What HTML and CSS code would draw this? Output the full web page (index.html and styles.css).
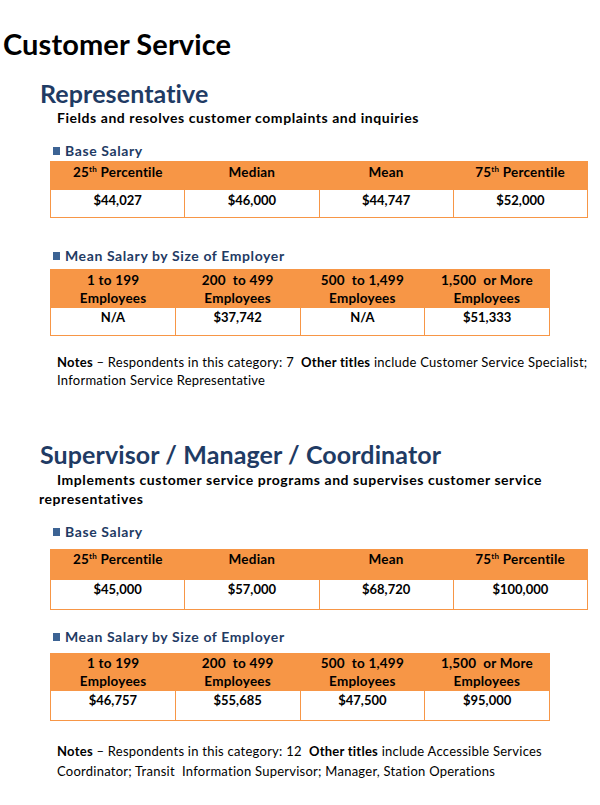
FILE: index.html
```html
<!DOCTYPE html>
<html lang="en">
<head>
<meta charset="utf-8">
<title>Customer Service</title>
<link rel="stylesheet" href="styles.css">
</head>
<body>
<h1 class="page-title">Customer Service</h1>

<section class="job job-first">
  <h2 class="job-title">Representative</h2>
  <p class="job-desc">Fields and resolves customer complaints and inquiries</p>

  <h3 class="sub-head sub-base">Base Salary</h3>
  <table class="salary wide">
    <thead>
      <tr><th>25<sup>th</sup> Percentile</th><th>Median</th><th>Mean</th><th>75<sup>th</sup> Percentile</th></tr>
    </thead>
    <tbody>
      <tr><td>$44,027</td><td>$46,000</td><td>$44,747</td><td>$52,000</td></tr>
    </tbody>
  </table>

  <h3 class="sub-head sub-size">Mean Salary by Size of Employer</h3>
  <table class="salary narrow">
    <thead>
      <tr><th>1 to 199<br>Employees</th><th>200 &nbsp;to 499<br>Employees</th><th>500 &nbsp;to 1,499<br>Employees</th><th>1,500 &nbsp;or More<br>Employees</th></tr>
    </thead>
    <tbody>
      <tr><td>N/A</td><td>$37,742</td><td>N/A</td><td>$51,333</td></tr>
    </tbody>
  </table>

  <div class="notes">
    <p class="note-line"><b>Notes</b> – Respondents in this category: 7 &nbsp;<b>Other titles</b> include Customer Service Specialist;</p>
    <p class="note-line">Information Service Representative</p>
  </div>
</section>

<section class="job job-second">
  <h2 class="job-title">Supervisor / Manager / Coordinator</h2>
  <p class="job-desc">Implements customer service programs and supervises customer service representatives</p>

  <h3 class="sub-head sub-base">Base Salary</h3>
  <table class="salary wide tall">
    <thead>
      <tr><th>25<sup>th</sup> Percentile</th><th>Median</th><th>Mean</th><th>75<sup>th</sup> Percentile</th></tr>
    </thead>
    <tbody>
      <tr><td>$45,000</td><td>$57,000</td><td>$68,720</td><td>$100,000</td></tr>
    </tbody>
  </table>

  <h3 class="sub-head sub-size">Mean Salary by Size of Employer</h3>
  <table class="salary narrow tall">
    <thead>
      <tr><th>1 to 199<br>Employees</th><th>200 &nbsp;to 499<br>Employees</th><th>500 &nbsp;to 1,499<br>Employees</th><th>1,500 &nbsp;or More<br>Employees</th></tr>
    </thead>
    <tbody>
      <tr><td>$46,757</td><td>$55,685</td><td>$47,500</td><td>$95,000</td></tr>
    </tbody>
  </table>

  <div class="notes">
    <p class="note-line"><b>Notes</b> – Respondents in this category: 12 &nbsp;<b>Other titles</b> include Accessible Services</p>
    <p class="note-line">Coordinator; Transit &nbsp;Information Supervisor; Manager, Station Operations</p>
  </div>
</section>
</body>
</html>
```

FILE: styles.css
```css
* { box-sizing: border-box; }

html, body {
  margin: 0;
  padding: 0;
  background: #ffffff;
}

body {
  font-family: Lato, "Open Sans", "Liberation Sans", sans-serif;
  color: #000000;
  width: 600px;
}

.page-title {
  margin: 27px 0 0 3px;
  font-size: 29px;
  line-height: 34px;
  font-weight: 700;
  letter-spacing: 0.1px;
}

.job-title {
  margin: 0 0 0 40px;
  font-size: 25px;
  line-height: 30px;
  font-weight: 700;
  color: #1f3b64;
  letter-spacing: 0.1px;
}

.job-first .job-title { margin-top: 17px; }
.job-second .job-title { margin-top: 50px; }

.job-desc {
  margin: 1px 0 0 39px;
  width: 540px;
  text-indent: 18px;
  font-size: 14px;
  line-height: 18px;
  font-weight: 700;
  letter-spacing: 0.55px;
}

.job-second .job-desc {
  margin-top: 1px;
  line-height: 19px;
  width: 520px;
}

.sub-head {
  display: flex;
  align-items: center;
  gap: 5px;
  margin: 0 0 0 53px;
  font-size: 14px;
  line-height: 18px;
  font-weight: 700;
  color: #1f3b64;
  letter-spacing: 0.6px;
}

.sub-head::before {
  content: "";
  width: 7px;
  height: 8px;
  background: #3c6394;
}

.job-first .sub-base { margin-top: 15px; }
.job-first .sub-size { margin-top: 29px; }
.job-second .sub-base { margin-top: 15px; }
.job-second .sub-size { margin-top: 18px; }

.salary {
  margin: 1px 0 0 50px;
  border-collapse: collapse;
  table-layout: fixed;
  border: 1px solid #f79646;
  font-size: 13px;
  font-weight: 700;
}

.job-first .sub-size + .salary { margin-top: 4px; }
.job-second .sub-base + .salary { margin-top: 8px; }
.job-second .sub-size + .salary { margin-top: 7px; }

.salary.wide { width: 538px; }
.salary.narrow { width: 500px; }

.salary th,
.salary td {
  padding: 1px 0 0;
  text-align: center;
  vertical-align: top;
  line-height: 18px;
  font-weight: 700;
}

.salary th {
  background: #f79646;
  height: 28px;
  font-size: 13.5px;
  letter-spacing: 0.2px;
}

.salary.narrow th { height: 38px; }

.salary td {
  height: 28px;
  border-left: 1px solid #f79646;
}

.salary td:first-child { border-left: none; }

.salary.narrow td { padding-top: 0; }

.salary.tall th { height: 30px; padding-top: 0; }
.salary.tall td { height: 30px; padding-top: 0; }
.salary.narrow.tall th { height: 37px; padding-top: 0; }

.salary sup {
  font-size: 8px;
  line-height: 0;
  vertical-align: 5px;
}

.notes {
  margin: 17px 0 0 57px;
  font-size: 13px;
  line-height: 18px;
  letter-spacing: 0.25px;
}

.note-line {
  margin: 0;
  white-space: nowrap;
}

.job-second .notes {
  margin-top: 20px;
  line-height: 20px;
}
```
